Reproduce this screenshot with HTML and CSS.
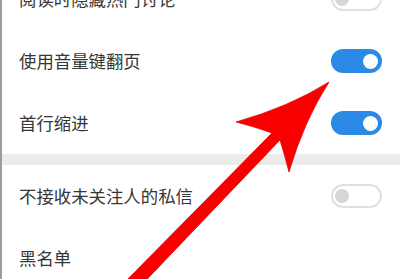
FILE: index.html
```html
<!DOCTYPE html>
<html lang="zh">
<head>
<meta charset="utf-8">
<link rel="stylesheet" href="styles.css">
</head>
<body>
<div class="screen">
  <div class="list">
    <div class="row"><span class="label">阅读时隐藏热门讨论</span><span class="toggle off"><span class="knob"></span></span></div>
    <div class="row"><span class="label">使用音量键翻页</span><span class="toggle on"><span class="knob"></span></span></div>
    <div class="row"><span class="label">首行缩进</span><span class="toggle on"><span class="knob"></span></span></div>
    <div class="band"></div>
    <div class="row"><span class="label">不接收未关注人的私信</span><span class="toggle off"><span class="knob"></span></span></div>
    <div class="row"><span class="label">黑名单</span></div>
  </div>
  <svg class="arrow" width="400" height="279" viewBox="0 0 400 279">
    <path d="M329 82 Q289 107 236 122 Q256 127 272 133 L122 285 L132 295 L280 140 Q285 156 289 172 Q304 121 329 82 Z" fill="#f80000" stroke="#e00000" stroke-width="0.8" stroke-linejoin="round"/>
  </svg>
</div>
</body>
</html>
```

FILE: styles.css
```css
html, body {
  margin: 0;
  padding: 0;
  background: #ffffff;
}
.screen {
  position: relative;
  width: 400px;
  height: 279px;
  overflow: hidden;
  background: #ffffff;
  border-left: 2px solid #9c9c9c;
  box-sizing: border-box;
}
.list {
  margin-top: -32px;
  display: flex;
  flex-direction: column;
}
.row {
  height: 62px;
  display: flex;
  align-items: center;
  justify-content: space-between;
  padding: 0 18px 0 17px;
}
.label {
  font-family: "Noto Sans CJK SC", "Noto Sans", sans-serif;
  font-size: 17.4px;
  color: #363636;
  line-height: 1;
}
.band {
  height: 11px;
  background: #ebebeb;
}
.toggle {
  width: 51px;
  height: 24px;
  border-radius: 12px;
  box-sizing: border-box;
  display: flex;
  align-items: center;
}
.toggle.on {
  background: #2a8ae6;
  justify-content: flex-end;
  padding-right: 4px;
}
.toggle.on .knob {
  width: 15px;
  height: 15px;
  border-radius: 50%;
  background: #ffffff;
}
.toggle.off {
  background: #ffffff;
  border: 2px solid #e0e0e0;
  justify-content: flex-start;
  padding-left: 2px;
}
.toggle.off .knob {
  width: 14px;
  height: 14px;
  border-radius: 50%;
  background: #d6d6d6;
}
.arrow {
  position: absolute;
  left: -2px;
  top: 0;
  pointer-events: none;
}
```
